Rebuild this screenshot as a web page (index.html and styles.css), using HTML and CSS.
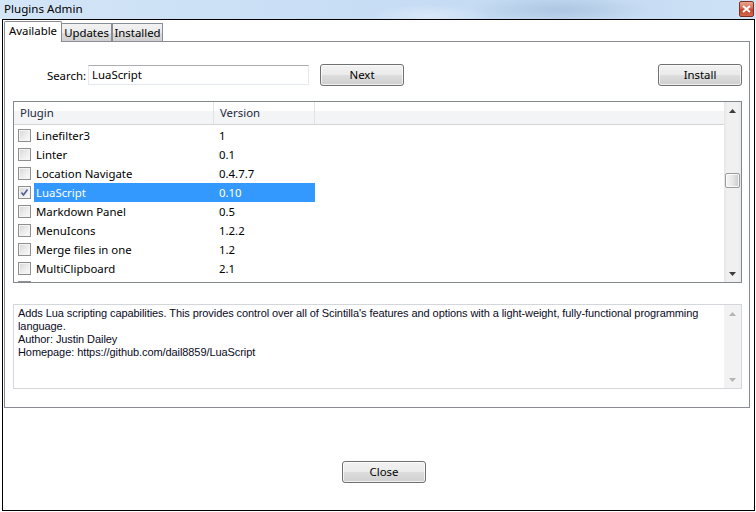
FILE: index.html
```html
<!DOCTYPE html>
<html>
<head>
<meta charset="utf-8">
<link rel="stylesheet" href="styles.css">
</head>
<body>
<div class="titlebar">
  <span class="title">Plugins Admin</span>
  <span class="closebtn"><svg width="9" height="8" viewBox="0 0 9 8"><path d="M1 1 L8 7 M8 1 L1 7" stroke="#fff" stroke-width="2" fill="none"/></svg></span>
</div>
<div class="frame">
  <div class="tabs">
    <div class="tab active">Available</div>
    <div class="tab t-upd">Updates</div>
    <div class="tab t-ins">Installed</div>
  </div>
  <div class="panel">
    <div class="searchrow">
      <label class="slabel">Search:</label>
      <div class="sinput">LuaScript</div>
      <div class="btn next">Next</div>
      <div class="btn install">Install</div>
    </div>
    <div class="listbox">
      <div class="listmain">
        <div class="lhead">
          <div class="hc hc1">Plugin</div>
          <div class="hc hc2">Version</div>
          <div class="hc hc3"></div>
        </div>
        <div class="lrows">
          <div class="row"><span class="cb"></span><span class="c1">Linefilter3</span><span class="c2">1</span></div>
          <div class="row"><span class="cb"></span><span class="c1">Linter</span><span class="c2">0.1</span></div>
          <div class="row"><span class="cb"></span><span class="c1">Location Navigate</span><span class="c2">0.4.7.7</span></div>
          <div class="row sel"><span class="cb"><svg width="9" height="9" viewBox="0 0 9 9"><path d="M1.5 4.5 L3.5 7 L7.5 1.5" stroke="#4b5f94" stroke-width="1.6" fill="none"/></svg></span><span class="c1">LuaScript</span><span class="c2">0.10</span></div>
          <div class="row"><span class="cb"></span><span class="c1">Markdown Panel</span><span class="c2">0.5</span></div>
          <div class="row"><span class="cb"></span><span class="c1">MenuIcons</span><span class="c2">1.2.2</span></div>
          <div class="row"><span class="cb"></span><span class="c1">Merge files in one</span><span class="c2">1.2</span></div>
          <div class="row"><span class="cb"></span><span class="c1">MultiClipboard</span><span class="c2">2.1</span></div>
          <div class="row"><span class="cb"></span><span class="c1"></span><span class="c2"></span></div>
        </div>
      </div>
      <div class="vscroll">
        <div class="sbtn"><svg width="7" height="4" viewBox="0 0 7 4"><path d="M0 4 L3.5 0 L7 4 Z" fill="#3c3c3c"/></svg></div>
        <div class="track"><div class="thumb"></div></div>
        <div class="sbtn"><svg width="7" height="4" viewBox="0 0 7 4"><path d="M0 0 L3.5 4 L7 0 Z" fill="#3c3c3c"/></svg></div>
      </div>
    </div>
    <div class="desc">
      <div class="desctext">Adds Lua scripting capabilities. This provides control over all of Scintilla's features and options with a light-weight, fully-functional programming<br>language.<br>Author: Justin Dailey<br>Homepage: https://github.com/dail8859/LuaScript</div>
      <div class="vscroll dis">
        <div class="sbtn"><svg width="7" height="4" viewBox="0 0 7 4"><path d="M0 4 L3.5 0 L7 4 Z" fill="#b4b4b4"/></svg></div>
        <div class="track"></div>
        <div class="sbtn"><svg width="7" height="4" viewBox="0 0 7 4"><path d="M0 0 L3.5 4 L7 0 Z" fill="#b4b4b4"/></svg></div>
      </div>
    </div>
  </div>
  <div class="footer">
    <div class="btn close">Close</div>
  </div>
</div>
</body>
</html>
```

FILE: styles.css
```css
* { box-sizing: border-box; }
html, body { margin: 0; padding: 0; background: #fff; }
body {
  width: 756px;
  height: 512px;
  overflow: hidden;
  font-family: "Noto Sans", "Open Sans", sans-serif;
  font-size: 11.4px;
  color: #000;
}

.titlebar {
  height: 19px;
  display: flex;
  justify-content: space-between;
  align-items: flex-start;
  background:
    radial-gradient(ellipse 90px 14px at 560px 10px, rgba(150,175,205,0.45), rgba(150,175,205,0) 100%),
    radial-gradient(ellipse 60px 12px at 430px 16px, rgba(255,255,255,0.35), rgba(255,255,255,0) 100%),
    linear-gradient(90deg, #d3e5f7 0%, #c8def5 45%, #c2d9f2 75%, #cfe2f6 100%);
}
.title {
  padding-left: 4px;
  line-height: 18px;
  font-size: 11.6px;
}
.closebtn {
  width: 15px;
  height: 16px;
  margin-top: 1px;
  margin-right: 2px;
  border: 1px solid #7e3224;
  border-radius: 2px;
  background: linear-gradient(180deg, #e9a48f 0%, #d96b52 45%, #c4452b 55%, #d3684c 100%);
  display: flex;
  align-items: center;
  justify-content: center;
}

.frame {
  margin-left: 2px;
  width: 753px;
  height: 492px;
  border: 1px solid #000;
  background: #fff;
}

.tabs {
  height: 21px;
  padding-left: 1px;
  display: flex;
  align-items: flex-end;
}
.tab {
  height: 18px;
  border: 1px solid #898c95;
  border-bottom: none;
  background: linear-gradient(180deg, #f2f2f2 0%, #ebebeb 50%, #dddddd 51%, #cfcfcf 100%);
  text-align: center;
  line-height: 17px;
}
.tab.active {
  position: relative;
  z-index: 1;
  height: 21px;
  margin-bottom: -1px;
  width: 58px;
  background: #fff;
  line-height: 18px;
  border-radius: 2px 2px 0 0;
}
.t-upd { width: 50px; border-left: none; }
.t-ins { width: 51px; }

.panel {
  margin-left: 1px;
  width: 746px;
  height: 367px;
  border: 1px solid #898c95;
  background: #fff;
}

.searchrow {
  margin-top: 22px;
  height: 22px;
  display: flex;
  align-items: center;
}
.slabel {
  width: 81px;
  text-align: right;
}
.sinput {
  margin-left: 2px;
  width: 221px;
  height: 20px;
  border: 1px solid #e3e9ef;
  border-top-color: #abadb3;
  padding-left: 3px;
  line-height: 18px;
}
.btn {
  width: 84px;
  height: 22px;
  border: 1px solid #707070;
  border-radius: 3px;
  background: linear-gradient(180deg, #f2f2f2 0%, #ebebeb 48%, #dddddd 52%, #cfcfcf 100%);
  box-shadow: inset 0 0 0 1px rgba(255,255,255,0.7);
  text-align: center;
  line-height: 20px;
  color: #000;
}
.next { margin-left: 11px; }
.install { margin-left: auto; margin-right: 7px; }

.listbox {
  margin-top: 15px;
  margin-left: 8px;
  width: 729px;
  height: 182px;
  border: 1px solid #828790;
  display: flex;
  overflow: hidden;
}
.listmain {
  flex: 1;
  overflow: hidden;
}
.lhead {
  height: 23px;
  display: flex;
  border-bottom: 1px solid #d5d5d5;
  background: linear-gradient(180deg, #ffffff 0%, #ffffff 40%, #f3f4f6 41%, #f3f4f6 100%);
}
.hc {
  height: 22px;
  line-height: 21px;
  padding-left: 6px;
  color: #1a2a40;
}
.hc1 { width: 200px; border-right: 1px solid #e2e3e5; }
.hc2 { width: 101px; border-right: 1px solid #e2e3e5; }
.hc3 { flex: 1; }

.lrows { padding-top: 1px; }
.row {
  height: 19px;
  display: flex;
  align-items: center;
}
.cb {
  margin-left: 4px;
  width: 13px;
  height: 13px;
  border: 1px solid #8e8f8f;
  background: linear-gradient(135deg, #d5d5d5 0%, #ebebeb 50%, #fbfbfb 100%);
  box-shadow: inset 0 0 0 1px #f4f4f4;
  display: flex;
  align-items: center;
  justify-content: center;
  flex: none;
}
.c1 {
  margin-left: 3px;
  width: 180px;
  height: 19px;
  line-height: 19px;
  padding-left: 2px;
  white-space: nowrap;
}
.c2 {
  width: 101px;
  height: 19px;
  line-height: 19px;
  padding-left: 5px;
}
.row.sel .c1, .row.sel .c2 {
  background: #3399ff;
  color: #fff;
}

.vscroll {
  width: 17px;
  flex: none;
  display: flex;
  flex-direction: column;
  background: linear-gradient(90deg, #e7e7e7 0%, #f0f0f0 20%, #f0f0f0 80%, #e9e9e9 100%);
}
.sbtn {
  height: 17px;
  display: flex;
  align-items: center;
  justify-content: center;
}
.track { flex: 1; }
.thumb {
  margin-top: 54px;
  margin-left: 1px;
  width: 15px;
  height: 15px;
  border: 1px solid #9a9a9a;
  border-radius: 2px;
  background: linear-gradient(90deg, #f4f4f4 0%, #e8e8e8 50%, #c9c9c9 100%);
  box-shadow: inset 0 0 0 1px rgba(255,255,255,0.8);
}
.vscroll.dis {
  background: #f2f2f2;
}

.desc {
  margin-top: 21px;
  margin-left: 8px;
  width: 729px;
  height: 85px;
  border: 1px solid #d3d7dc;
  display: flex;
}
.desctext {
  flex: 1;
  padding: 2px 0 0 4px;
  font-family: "Liberation Sans", Arial, sans-serif;
  font-size: 11px;
  letter-spacing: -0.08px;
  line-height: 13px;
  white-space: nowrap;
  overflow: hidden;
  color: #0a0a1e;
}

.footer {
  padding-top: 53px;
  padding-left: 339px;
}
```
